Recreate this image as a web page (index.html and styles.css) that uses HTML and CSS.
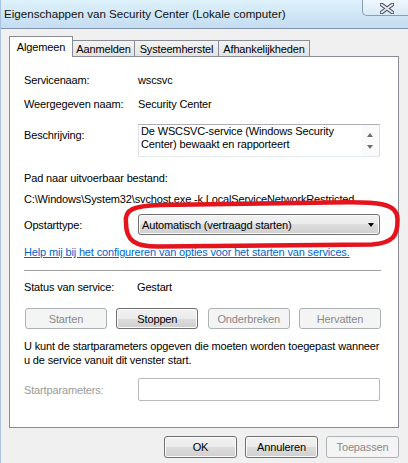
FILE: index.html
```html
<!DOCTYPE html>
<html>
<head>
<meta charset="utf-8">
<link rel="stylesheet" href="styles.css">
</head>
<body>
<div class="window">
  <div class="titlebar">
    <span class="title">Eigenschappen van Security Center (Lokale computer)</span>
    <div class="close">
      <svg width="14" height="11" viewBox="0 0 14 11">
        <path d="M1.5 1.5 L12.5 9.5 M12.5 1.5 L1.5 9.5" stroke="#4f5561" stroke-width="4" stroke-linecap="round"/>
        <path d="M1.5 1.5 L12.5 9.5 M12.5 1.5 L1.5 9.5" stroke="#e9ecef" stroke-width="1.6" stroke-linecap="round"/>
      </svg>
    </div>
  </div>
  <div class="dialog">
    <div class="tabs">
      <div class="tab active">Algemeen</div>
      <div class="tab t2">Aanmelden</div>
      <div class="tab t3">Systeemherstel</div>
      <div class="tab t4">Afhankelijkheden</div>
    </div>
    <div class="panel">
      <div class="row r-name"><span class="lbl">Servicenaam:</span><span>wscsvc</span></div>
      <div class="row r-disp"><span class="lbl">Weergegeven naam:</span><span>Security Center</span></div>
      <div class="row r-desc">
        <span class="lbl lbl-desc">Beschrijving:</span>
        <div class="textbox">
          <div class="tb-text">De WSCSVC-service (Windows Security<br>Center) bewaakt en rapporteert</div>
          <div class="tb-scroll"><span class="up"></span><span class="down"></span></div>
        </div>
      </div>
      <div class="line r-pathlbl">Pad naar uitvoerbaar bestand:</div>
      <div class="line r-path">C:\Windows\System32\svchost.exe -k LocalServiceNetworkRestricted</div>
      <div class="row r-start">
        <span class="lbl">Opstarttype:</span>
        <div class="combo"><span>Automatisch (vertraagd starten)</span><span class="arrow"></span></div>
      </div>
      <div class="line r-link"><span class="link">Help mij bij het configureren van opties voor het starten van services.</span></div>
      <div class="sep"></div>
      <div class="row r-status"><span class="lbl lbl-status">Status van service:</span><span>Gestart</span></div>
      <div class="svc-buttons">
        <button class="btn disabled">Starten</button>
        <button class="btn">Stoppen</button>
        <button class="btn disabled">Onderbreken</button>
        <button class="btn disabled">Hervatten</button>
      </div>
      <div class="para">U kunt de startparameters opgeven die moeten worden toegepast wanneer<br>u de service vanuit dit venster start.</div>
      <div class="row r-params">
        <span class="lbl lbl-gray">Startparameters:</span>
        <div class="input"></div>
      </div>
    </div>
    <div class="footer">
      <button class="btn fbtn">OK</button>
      <button class="btn fbtn">Annuleren</button>
      <button class="btn fbtn disabled">Toepassen</button>
    </div>
  </div>
  <svg class="mark" width="408" height="463" viewBox="0 0 408 463">
    <path d="M126 223 C124 209 134 206 160 205 L330 202.5 C382 201 397 204 397.5 219 C398 236 393 243 372 244.5 L160 246.5 C134 247 126 240 126 223 Z" fill="none" stroke="#e5131c" stroke-width="4.5"/>
  </svg>
</div>
</body>
</html>
```

FILE: styles.css
```css
body {
  margin: 0;
  font-family: "Liberation Sans", Arial, sans-serif;
  font-size: 11px;
  letter-spacing: -0.15px;
  color: #000;
}
.window {
  position: relative;
  width: 408px;
  height: 463px;
  background: #f0f0f0;
  overflow: hidden;
  border-left: 1px solid #a9c4e2;
  box-sizing: border-box;
}
.titlebar {
  height: 28px;
  background: linear-gradient(#def2fb, #c4dcf1);
  border-bottom: 1px solid #8294ac;
  display: flex;
  justify-content: space-between;
  align-items: flex-start;
}
.title {
  font-size: 11.6px;
  letter-spacing: 0;
  line-height: 28px;
  padding-left: 3px;
  color: #111;
}
.close {
  width: 46px;
  height: 17px;
  margin-top: -1px;
  border: 1px solid #8c9cb2;
  border-right: none;
  border-radius: 0 0 0 5px;
  background: linear-gradient(#f0f8fd, #d8e9f6);
  display: flex;
  align-items: center;
  justify-content: center;
  box-sizing: border-box;
}
.close svg { margin-top: 1px; margin-left: 2px; }
.dialog {
  padding: 7px 9px 0 8px;
}
.tabs {
  display: flex;
  align-items: flex-end;
  height: 20px;
  position: relative;
  z-index: 2;
}
.tab {
  height: 16px;
  box-sizing: border-box;
  border: 1px solid #898c95;
  border-bottom: none;
  background: linear-gradient(#f3f3f3, #e3e3e3);
  display: flex;
  align-items: center;
  justify-content: center;
  margin-left: -1px;
  padding-top: 1px;
}
.tab.active {
  height: 21px;
  margin-bottom: -1px;
  margin-left: 0;
  background: #fff;
  width: 64px;
  padding-top: 0;
  padding-bottom: 1px;
}
.t2 { width: 63px; }
.t3 { width: 85px; }
.t4 { width: 92px; }
.panel {
  height: 372px;
  box-sizing: border-box;
  border: 1px solid #898c95;
  background: #fff;
  padding: 16px 17px 0 14px;
}
.row {
  display: flex;
  align-items: flex-start;
  line-height: 14px;
}
.lbl {
  width: 114px;
  flex: none;
}
.line { line-height: 14px; }
.r-disp { margin-top: 10px; }
.r-desc { margin-top: 13px; }
.lbl-desc { padding-top: 4px; }
.textbox {
  width: 242px;
  height: 33px;
  box-sizing: border-box;
  border: 1px solid;
  border-color: #abadb3 #dbdfe6 #e3e9ef #e2e3ea;
  display: flex;
}
.tb-text {
  flex: 1;
  padding: 0 2px;
  line-height: 12.5px;
}
.tb-scroll {
  width: 17px;
  background: #fafafa;
  position: relative;
}
.up, .down {
  position: absolute;
  left: 5px;
  width: 0;
  height: 0;
  border-left: 3.5px solid transparent;
  border-right: 3.5px solid transparent;
}
.up { top: 8px; border-bottom: 4px solid #6e6e6e; }
.down { top: 20px; border-top: 4px solid #6e6e6e; }
.r-pathlbl { margin-top: 14px; }
.r-path { margin-top: 7px; }
.r-start {
  margin-top: 8px;
  align-items: center;
}
.combo {
  width: 242px;
  height: 21px;
  box-sizing: border-box;
  border: 1px solid #707070;
  border-radius: 3px;
  background: linear-gradient(#f2f2f2 0%, #ebebeb 50%, #dddddd 50%, #cfcfcf 100%);
  box-shadow: inset 0 0 0 1px #fbfbfb;
  display: flex;
  align-items: center;
  justify-content: space-between;
  padding: 0 5px 0 3px;
}
.arrow {
  width: 0;
  height: 0;
  border-left: 3.5px solid transparent;
  border-right: 3.5px solid transparent;
  border-top: 4px solid #000;
}
.r-link { margin-top: 10px; }
.link {
  color: #0066cc;
  text-decoration: underline;
}
.sep {
  margin-top: 11px;
  height: 1px;
  background: #a0a0a0;
}
.r-status { margin-top: 9px; }
.lbl-status { width: 113px; }
.svc-buttons {
  margin-top: 14px;
  display: flex;
  justify-content: space-between;
  padding-left: 1px;
}
.btn {
  width: 82px;
  height: 21px;
  box-sizing: border-box;
  border: 1px solid #707070;
  border-radius: 3px;
  background: linear-gradient(#f2f2f2 0%, #ebebeb 50%, #dddddd 50%, #cfcfcf 100%);
  box-shadow: inset 0 0 0 1px #fbfbfb;
  font: inherit;
  letter-spacing: inherit;
  color: #000;
  padding: 0;
  margin: 0;
  display: flex;
  align-items: center;
  justify-content: center;
}
.btn.disabled {
  border-color: #adb2b5;
  background: #f4f4f4;
  box-shadow: none;
  color: #8a8a8a;
}
.para {
  margin-top: 10px;
  line-height: 14px;
}
.r-params {
  margin-top: 11px;
  align-items: center;
}
.lbl-gray { color: #9a9a9a; }
.input {
  width: 242px;
  height: 23px;
  box-sizing: border-box;
  border: 1px solid #b9b9b9;
  border-radius: 2px;
  background: #fff;
}
.footer {
  display: flex;
  justify-content: flex-end;
  gap: 8px;
  padding-top: 8px;
}
.fbtn {
  width: 73px;
  height: 22px;
}
.mark {
  position: absolute;
  left: -1px;
  top: 0;
  pointer-events: none;
}
```
